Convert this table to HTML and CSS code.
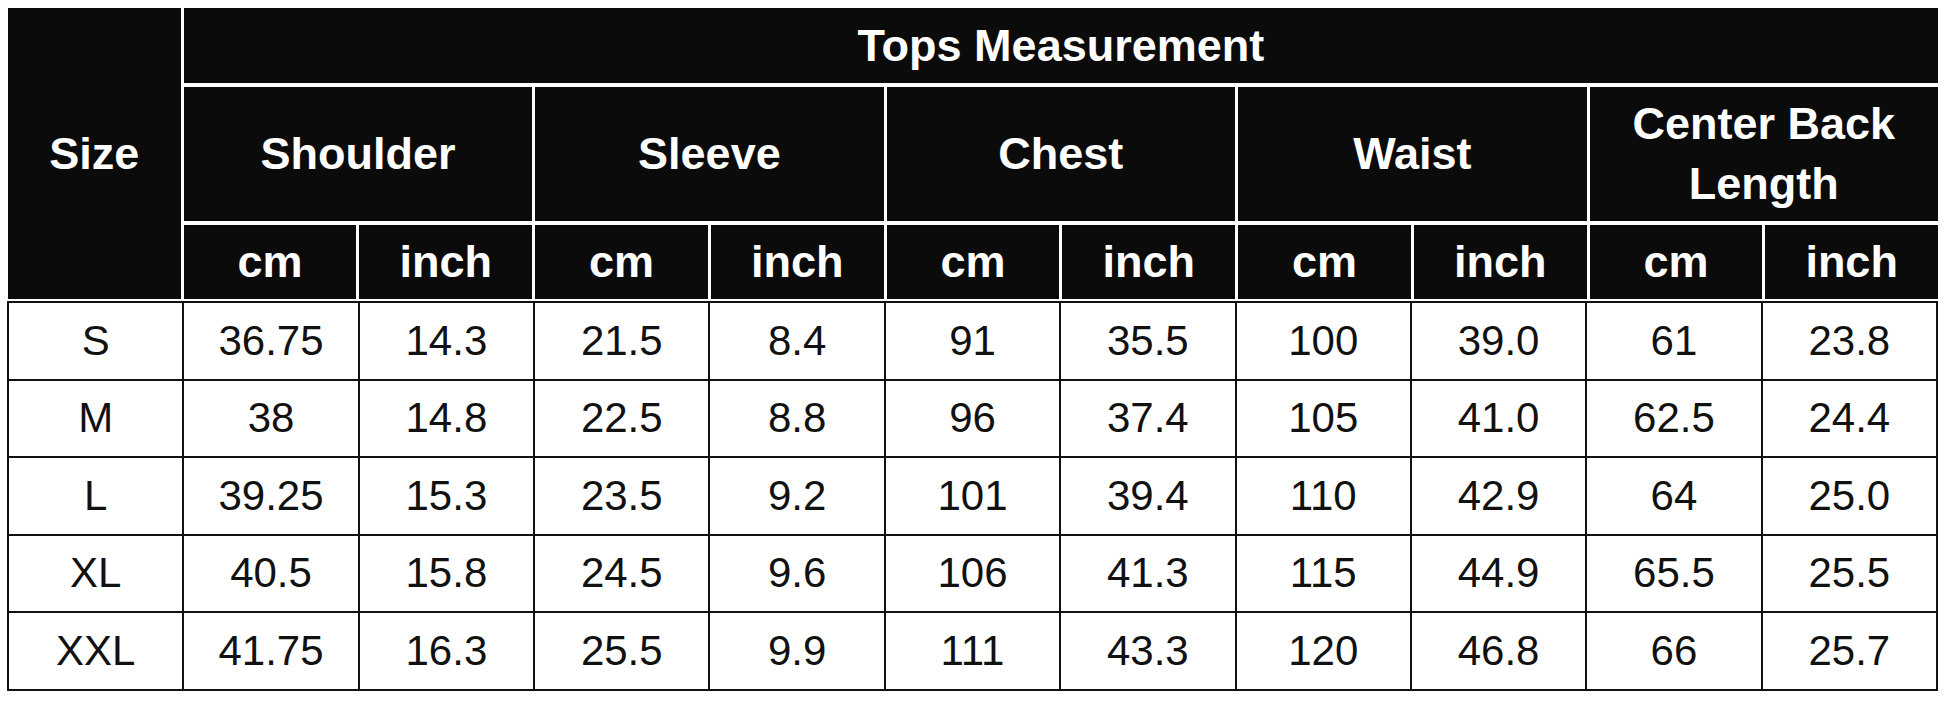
FILE: index.html
```html
<!DOCTYPE html>
<html>
<head>
<meta charset="utf-8">
<link rel="stylesheet" href="styles.css">
</head>
<body>
<div class="chart">
  <div class="head">
    <div class="hc size">Size</div>
    <div class="hc tops">Tops Measurement</div>
    <div class="hc grp">Shoulder</div>
    <div class="hc grp">Sleeve</div>
    <div class="hc grp">Chest</div>
    <div class="hc grp">Waist</div>
    <div class="hc grp two">Center Back<br>Length</div>
    <div class="hc unit">cm</div><div class="hc unit">inch</div>
    <div class="hc unit">cm</div><div class="hc unit">inch</div>
    <div class="hc unit">cm</div><div class="hc unit">inch</div>
    <div class="hc unit">cm</div><div class="hc unit">inch</div>
    <div class="hc unit">cm</div><div class="hc unit">inch</div>
  </div>
  <div class="body">
    <div class="c">S</div><div class="c">36.75</div><div class="c">14.3</div><div class="c">21.5</div><div class="c">8.4</div><div class="c">91</div><div class="c">35.5</div><div class="c">100</div><div class="c">39.0</div><div class="c">61</div><div class="c">23.8</div>
    <div class="c">M</div><div class="c">38</div><div class="c">14.8</div><div class="c">22.5</div><div class="c">8.8</div><div class="c">96</div><div class="c">37.4</div><div class="c">105</div><div class="c">41.0</div><div class="c">62.5</div><div class="c">24.4</div>
    <div class="c">L</div><div class="c">39.25</div><div class="c">15.3</div><div class="c">23.5</div><div class="c">9.2</div><div class="c">101</div><div class="c">39.4</div><div class="c">110</div><div class="c">42.9</div><div class="c">64</div><div class="c">25.0</div>
    <div class="c">XL</div><div class="c">40.5</div><div class="c">15.8</div><div class="c">24.5</div><div class="c">9.6</div><div class="c">106</div><div class="c">41.3</div><div class="c">115</div><div class="c">44.9</div><div class="c">65.5</div><div class="c">25.5</div>
    <div class="c">XXL</div><div class="c">41.75</div><div class="c">16.3</div><div class="c">25.5</div><div class="c">9.9</div><div class="c">111</div><div class="c">43.3</div><div class="c">120</div><div class="c">46.8</div><div class="c">66</div><div class="c">25.7</div>
  </div>
</div>
</body>
</html>
```
FILE: styles.css
```css
html, body {
  margin: 0;
  padding: 0;
  background: #ffffff;
}
body {
  padding: 8px 0 0 8px;
}
.chart {
  width: 1930px;
  font-family: "Liberation Sans", Arial, sans-serif;
}
.head {
  display: grid;
  grid-template-columns: repeat(11, 1fr);
  grid-template-rows: 75px 134px 74px;
  column-gap: 3px;
  row-gap: 4px;
}
.hc {
  background: #0b0b0b;
  color: #ffffff;
  font-weight: bold;
  font-size: 45px;
  display: flex;
  align-items: center;
  justify-content: center;
  text-align: center;
}
.size {
  grid-row: 1 / 4;
  grid-column: 1;
}
.tops {
  grid-row: 1;
  grid-column: 2 / 12;
}
.grp {
  grid-column: span 2;
}
.two {
  line-height: 60px;
}
.body {
  margin-top: 2px;
  display: grid;
  grid-template-columns: repeat(11, 1fr);
  grid-auto-rows: 75.5px;
  gap: 2px;
  padding: 2px;
  background: #111111;
  margin-left: -1px;
}
.c {
  background: #ffffff;
  color: #111111;
  font-size: 42px;
  display: flex;
  align-items: center;
  justify-content: center;
}
```
